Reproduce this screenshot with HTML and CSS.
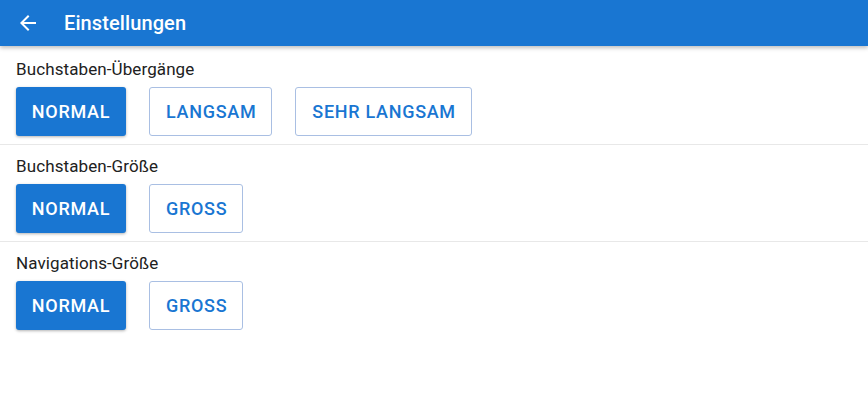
FILE: index.html
```html
<!DOCTYPE html>
<html lang="de">
<head>
<meta charset="utf-8">
<link rel="stylesheet" href="styles.css">
</head>
<body>
<header class="appbar">
  <svg class="back" viewBox="0 0 24 24" width="24" height="24"><path fill="#fff" d="M20 11H7.83l5.59-5.59L12 4l-8 8 8 8 1.41-1.41L7.83 13H20v-2z"/></svg>
  <h1 class="title">Einstellungen</h1>
</header>
<main>
  <section class="group first">
    <div class="label">Buchstaben-Übergänge</div>
    <div class="buttons">
      <button class="btn filled">NORMAL</button>
      <button class="btn outlined">LANGSAM</button>
      <button class="btn outlined">SEHR LANGSAM</button>
    </div>
  </section>
  <section class="group">
    <div class="label">Buchstaben-Größe</div>
    <div class="buttons">
      <button class="btn filled">NORMAL</button>
      <button class="btn outlined">GROSS</button>
    </div>
  </section>
  <section class="group last">
    <div class="label">Navigations-Größe</div>
    <div class="buttons">
      <button class="btn filled">NORMAL</button>
      <button class="btn outlined">GROSS</button>
    </div>
  </section>
</main>
</body>
</html>
```
FILE: styles.css
```css
* { box-sizing: border-box; }
html, body { margin: 0; padding: 0; background: #fff; }
body { font-family: Roboto, "Liberation Sans", sans-serif; color: #212121; }
.appbar {
  height: 46px;
  background: #1976d2;
  display: flex;
  align-items: center;
  padding-left: 16px;
  box-shadow: 0 2px 4px rgba(0,0,0,0.25);
  position: relative;
  z-index: 1;
}
.back { margin-right: 24px; }
.title {
  margin: 0;
  color: #fff;
  font-size: 20px;
  font-weight: 500;
  letter-spacing: 0.1px;
}
.group {
  padding: 11px 16px 8px;
  border-bottom: 1px solid #e8e8e8;
}
.group.first { padding-top: 13px; }
.group.last { border-bottom: none; }
.label {
  font-size: 17px;
  line-height: 20px;
  margin-bottom: 8px;
  letter-spacing: 0.1px;
}
.buttons { display: flex; gap: 23px; }
.btn {
  height: 49px;
  font-family: Roboto, "Liberation Sans", sans-serif;
  font-size: 18px;
  font-weight: 500;
  letter-spacing: 0.7px;
  border-radius: 3px;
  padding: 0 15px 0 16px;
  cursor: pointer;
}
.filled {
  background: #1976d2;
  color: #fff;
  border: none;
  width: 110px;
  padding: 0;
  box-shadow: 0 1px 3px rgba(0,0,0,0.3);
}
.outlined {
  background: #fff;
  color: #1976d2;
  border: 1px solid #a9bfe3;
}
```
